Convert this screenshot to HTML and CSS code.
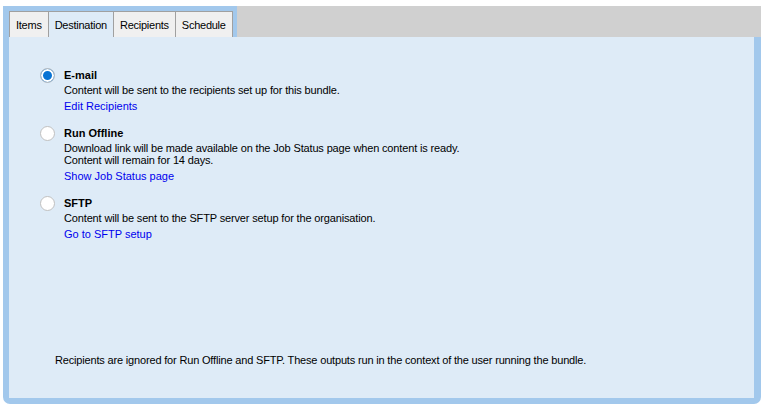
FILE: index.html
```html
<!DOCTYPE html>
<html lang="en">
<head>
    <meta charset="UTF-8">
    <title>Bundle - Destination</title>
    <link rel="stylesheet" href="styles.css">
</head>
<body>
    <div class="bundle">
        <div class="tab-row">
            <ul class="tabs">
                <li class="tab">Items</li>
                <li class="tab active">Destination</li>
                <li class="tab">Recipients</li>
                <li class="tab">Schedule</li>
            </ul>
            <div class="tab-filler"></div>
        </div>
        <div class="panel">
            <div class="options">
                <label class="option">
                    <input type="radio" name="output" checked>
                    <div class="option-body">
                        <div class="option-title">E-mail</div>
                        <div class="option-desc">Content will be sent to the recipients set up for this bundle.</div>
                        <a href="#" class="option-link">Edit Recipients</a>
                    </div>
                </label>
                <label class="option">
                    <input type="radio" name="output">
                    <div class="option-body">
                        <div class="option-title">Run Offline</div>
                        <div class="option-desc">Download link will be made available on the Job Status page when content is ready.<br>Content will remain for 14 days.</div>
                        <a href="#" class="option-link">Show Job Status page</a>
                    </div>
                </label>
                <label class="option">
                    <input type="radio" name="output">
                    <div class="option-body">
                        <div class="option-title">SFTP</div>
                        <div class="option-desc">Content will be sent to the SFTP server setup for the organisation.</div>
                        <a href="#" class="option-link">Go to SFTP setup</a>
                    </div>
                </label>
            </div>
            <p class="note">Recipients are ignored for Run Offline and SFTP. These outputs run in the context of the user running the bundle.</p>
        </div>
    </div>
</body>
</html>
```

FILE: styles.css
```css
body {
    font-family: "Liberation Sans", Arial, sans-serif;
    font-size: 11px;
    letter-spacing: -0.15px;
    color: #000000;
    background-color: #ffffff;
    margin: 0;
    padding: 6px 0 0 3px;
}
.bundle {
    display: flex;
    flex-direction: column;
    height: 398px;
    background-color: #a2c8ec;
    border-radius: 0 0 7px 7px;
}
.tab-row {
    display: flex;
    height: 31px;
}
.tabs {
    display: flex;
    list-style: none;
    margin: 0;
    padding: 5px 4px 0 6px;
    background-color: #a2c8ec;
}
.tab {
    height: 25px;
    line-height: 26px;
    padding: 0 6px;
    letter-spacing: -0.25px;
    background-color: #f0f0f0;
    border: 1px solid #a0a0a0;
    border-bottom: none;
    margin-right: -1px;
}
.tab:last-child {
    margin-right: 0;
}
.tab.active {
    background-color: #deebf7;
}
.tab-filler {
    flex: 1;
    background-color: #d0d0d0;
}
.panel {
    flex: 1;
    display: flex;
    flex-direction: column;
    justify-content: space-between;
    background-color: #deebf7;
    margin: 0 7px 6px 6px;
    padding: 31px 0 0 31px;
}
.options {
    display: flex;
    flex-direction: column;
    gap: 12px;
}
.option {
    display: flex;
    align-items: flex-start;
    gap: 9px;
}
.option input {
    appearance: none;
    width: 15px;
    height: 15px;
    margin: 0;
    flex-shrink: 0;
    border: 1px solid #c0c0c0;
    border-radius: 50%;
    background-color: #ffffff;
}
.option input:checked {
    background-color: #0a74d4;
    box-shadow: inset 0 0 0 2px #ffffff;
}
.option-body {
    display: flex;
    flex-direction: column;
}
.option-title {
    font-weight: bold;
    line-height: 15px;
    letter-spacing: 0;
}
.option-desc {
    line-height: 12px;
    margin-top: 1px;
}
.option-link {
    color: #0000ee;
    text-decoration: none;
    line-height: 16px;
    margin-top: 2px;
    letter-spacing: 0;
}
.note {
    margin: 0 0 32px 15px;
    letter-spacing: -0.17px;
}
```
